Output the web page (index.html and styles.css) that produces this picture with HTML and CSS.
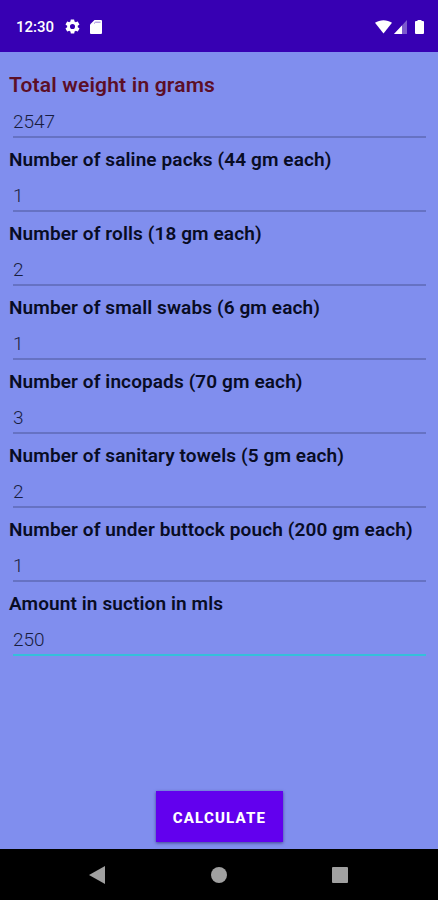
FILE: index.html
```
<!DOCTYPE html>
<html lang="en">
<head>
  <meta charset="UTF-8" />
  <meta name="viewport" content="width=device-width, initial-scale=1.0" />
  <title>Blood Loss Calculator</title>
  <link rel="stylesheet" href="styles.css">
</head>
<body>
  <header class="status-bar">
    <span class="clock">12:30</span>
    <svg class="gear" width="17" height="17" viewBox="0 0 24 24"><path fill-rule="evenodd" d="M19.4 13a7.500 7.500 0 0 0 0-2l2.100-1.600c.2-.2.300-.4.100-.7l-2-3.400c-.1-.2-.4-.3-.6-.2l-2.500 1a7 7 0 0 0-1.700-1l-.4-2.700a.5.5 0 0 0-.5-.4h-4a.5.5 0 0 0-.5.400L9.100 5.100c-.6.200-1.200.6-1.700 1l-2.500-1c-.2-.1-.5 0-.6.200l-2 3.400c-.1.200-.1.500.1.700L4.500 11a7.500 7.500 0 0 0 0 2l-2.100 1.600c-.2.200-.2.400-.1.700l2 3.400c.1.200.4.300.6.200l2.500-1c.5.400 1.100.7 1.700 1l.4 2.700c0 .2.200.4.500.4h4c.2 0 .5-.2.500-.4l.4-2.700c.6-.2 1.200-.6 1.700-1l2.500 1c.2.100.5 0 .6-.2l2-3.400c.1-.2.1-.5-.1-.7zM12 15.600a3.600 3.600 0 1 1 0-7.200 3.600 3.600 0 0 1 0 7.200z"/></svg>
    <svg class="sd-card" width="12" height="14" viewBox="0 0 12 14"><path d="M4.500 0H11a1 1 0 0 1 1 1v12a1 1 0 0 1-1 1H1a1 1 0 0 1-1-1V4.500z"/><path class="slot" d="M4 3.500L5.500 2.200H10.500"/></svg>
    <svg class="wifi" width="17" height="14" viewBox="0 0 17 14"><path d="M0 2.800C5 -.6 12 -.6 17 2.800L8.500 13.600z"/></svg>
    <svg class="signal" width="13" height="14" viewBox="0 0 13 14"><path opacity=".35" d="M13 0v14H0z"/><path d="M8 5.400V14H0z"/></svg>
    <svg class="battery" width="9" height="14" viewBox="0 0 9 14"><path d="M2.500 0h4v1H8a1 1 0 0 1 1 1V13a1 1 0 0 1-1 1H1a1 1 0 0 1-1-1V2a1 1 0 0 1 1-1h1.500z"/></svg>
  </header>

  <form class="calculator" id="calculatorForm">
    <div class="form-group total">
      <label for="weight">Total weight in grams</label>
      <input type="text" id="weight" value="2547" />
    </div>
    <div class="form-group">
      <label for="saline">Number of saline packs (44 gm each)</label>
      <input type="text" id="saline" value="1" />
    </div>
    <div class="form-group">
      <label for="rolls">Number of rolls (18 gm each)</label>
      <input type="text" id="rolls" value="2" />
    </div>
    <div class="form-group">
      <label for="swabs">Number of small swabs (6 gm each)</label>
      <input type="text" id="swabs" value="1" />
    </div>
    <div class="form-group">
      <label for="incopads">Number of incopads (70 gm each)</label>
      <input type="text" id="incopads" value="3" />
    </div>
    <div class="form-group">
      <label for="towels">Number of sanitary towels (5 gm each)</label>
      <input type="text" id="towels" value="2" />
    </div>
    <div class="form-group">
      <label for="pouch">Number of under buttock pouch (200 gm each)</label>
      <input type="text" id="pouch" value="1" />
    </div>
    <div class="form-group">
      <label for="suction">Amount in suction in mls</label>
      <input class="active" type="text" id="suction" value="250" />
    </div>

    <button type="button" class="calculate-btn">CALCULATE</button>
  </form>

  <nav class="nav-bar">
    <svg width="16" height="18" viewBox="0 0 16 18"><path d="M16 0v18L0 9z"/></svg>
    <svg width="16" height="16" viewBox="0 0 16 16"><circle cx="8" cy="8" r="8"/></svg>
    <svg width="16" height="16" viewBox="0 0 16 16"><rect width="16" height="16" rx="1"/></svg>
  </nav>
</body>
</html>
```

FILE: styles.css
```
* {
  margin: 0;
  padding: 0;
  box-sizing: border-box;
}

body {
  font-family: Roboto, sans-serif;
  background: #808eee;
  height: 900px;
  display: flex;
  flex-direction: column;
}

.status-bar {
  height: 52px;
  padding: 1px 14px 0 16px;
  background: #3700b3;
  color: #fff;
  display: flex;
  align-items: center;
}

.status-bar svg {
  fill: #fff;
}

.clock {
  width: 38px;
  padding-top: 1px;
  font-size: 15px;
  font-weight: 500;
}

.gear {
  margin-left: 10px;
}

.sd-card {
  margin-left: 9px;
}

.slot {
  fill: none;
  stroke: #3700b3;
  stroke-width: 1;
  opacity: 0.5;
}

.wifi {
  margin-left: auto;
}

.signal {
  margin-left: 2px;
}

.battery {
  margin-left: 8px;
}

.calculator {
  flex: 1;
  padding: 21px 9px 7px;
  display: flex;
  flex-direction: column;
}

.form-group {
  height: 74px;
}

label {
  display: block;
  height: 26px;
  line-height: 26px;
  color: #080c24;
  font-size: 19px;
  font-weight: 600;
  letter-spacing: 0.11px;
  white-space: nowrap;
}

.total label {
  color: #5c0f27;
  font-size: 21px;
  line-height: 24px;
  letter-spacing: 0.18px;
}

input {
  display: block;
  width: 413px;
  height: 39px;
  margin-left: 4px;
  padding-top: 8px;
  border: none;
  border-bottom: 2px solid #6672c3;
  background: transparent;
  color: #181d40;
  font-family: inherit;
  font-size: 19px;
  font-weight: 350;
  outline: none;
}

input.active {
  border-bottom-color: #34c0da;
}

.calculate-btn {
  width: 127px;
  height: 51px;
  margin: auto auto 0 147px;
  padding-top: 2px;
  border: none;
  background: #6200ee;
  box-shadow: 0 1px 3px rgba(20, 20, 80, 0.6);
  color: #fff;
  font-family: inherit;
  font-size: 15px;
  font-weight: 800;
  letter-spacing: 1.2px;
}

.nav-bar {
  height: 51px;
  padding: 0 90px 0 89px;
  background: #000;
  display: flex;
  align-items: center;
  justify-content: space-between;
}

.nav-bar svg {
  fill: #a0a0a0;
}
```
